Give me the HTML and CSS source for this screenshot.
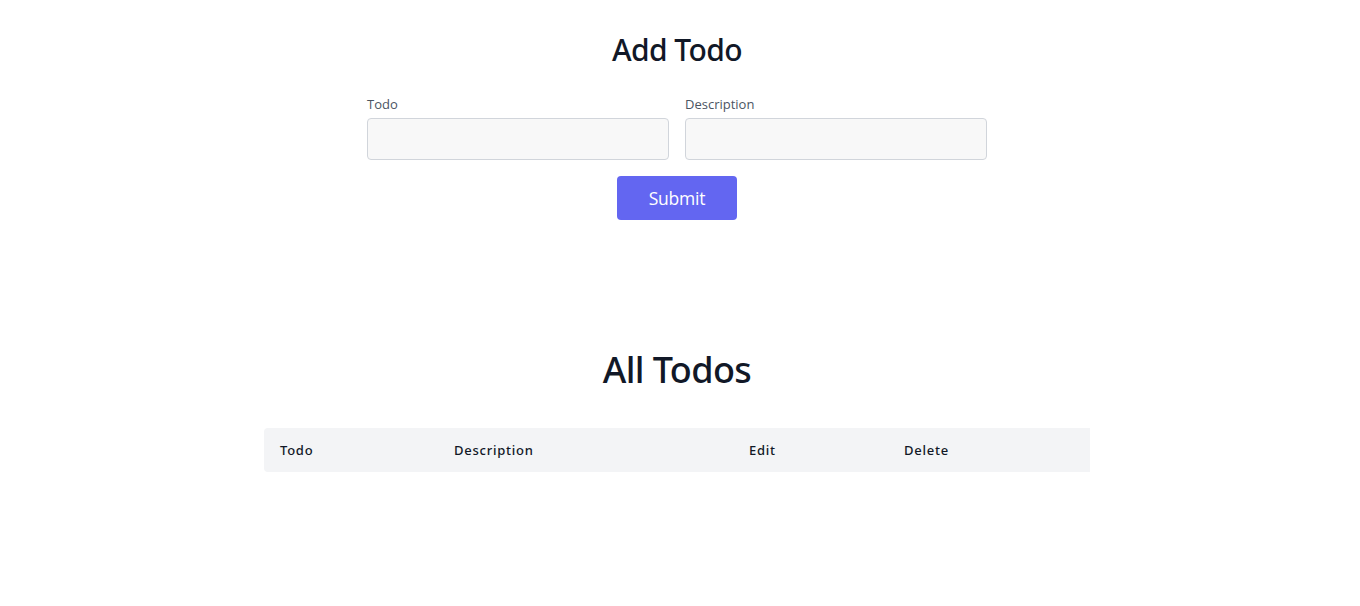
FILE: index.html
```html
<!DOCTYPE html>
<html lang="en">
<head>
<meta charset="utf-8">
<title>Todos</title>
<link rel="stylesheet" href="styles.css">
</head>
<body>
<main class="page">
  <section class="add">
    <h1 class="title-add">Add Todo</h1>
    <form class="form">
      <div class="fields">
        <div class="field">
          <label class="label" for="todo">Todo</label>
          <input class="input" id="todo" type="text">
        </div>
        <div class="field">
          <label class="label" for="desc">Description</label>
          <input class="input" id="desc" type="text">
        </div>
      </div>
      <button class="btn" type="button">Submit</button>
    </form>
  </section>
  <section class="list">
    <h2 class="title-all">All Todos</h2>
    <div class="table">
      <div class="th c1">Todo</div>
      <div class="th c2">Description</div>
      <div class="th c3">Edit</div>
      <div class="th c4">Delete</div>
    </div>
  </section>
</main>
</body>
</html>
```
FILE: styles.css
```css
* { box-sizing: border-box; }
html, body { margin: 0; background: #fff; }
body {
  font-family: "Open Sans", "Noto Sans", sans-serif;
  color: #111827;
}
.page {
  width: 1354px;
  display: flex;
  flex-direction: column;
  align-items: center;
}
.add {
  padding-top: 32px;
  display: flex;
  flex-direction: column;
  align-items: center;
}
.title-add {
  margin: 0;
  font-family: "Noto Sans", "Open Sans", sans-serif;
  font-size: 30px;
  line-height: 36px;
  font-weight: 500;
  color: #111827;
  letter-spacing: -0.6px;
}
.form {
  margin-top: 26px;
  display: flex;
  flex-direction: column;
  align-items: center;
}
.fields {
  display: flex;
  gap: 16px;
}
.field {
  width: 302px;
  display: flex;
  flex-direction: column;
}
.label {
  font-size: 13px;
  line-height: 20px;
  color: #4b5563;
  margin-bottom: 4px;
}
.input {
  height: 42px;
  width: 100%;
  background: #f8f8f8;
  border: 1px solid #d1d5db;
  border-radius: 4px;
  font: inherit;
}
.btn {
  margin-top: 16px;
  width: 120px;
  height: 44px;
  background: #6366f1;
  color: #fff;
  border: 0;
  border-radius: 4px;
  font-family: inherit;
  font-size: 17.5px;
  letter-spacing: -0.2px;
}
.list {
  margin-top: 130px;
  display: flex;
  flex-direction: column;
  align-items: center;
}
.title-all {
  margin: 0;
  font-family: "Noto Sans", "Open Sans", sans-serif;
  font-size: 36px;
  line-height: 40px;
  font-weight: 500;
  color: #111827;
  letter-spacing: -0.6px;
}
.table {
  margin-top: 38px;
  width: 826px;
  height: 44px;
  background: #f3f4f6;
  border-radius: 4px 0 0 4px;
  display: grid;
  grid-template-columns: 174px 295px 155px 202px;
  align-items: center;
}
.th {
  padding-left: 16px;
  font-family: "Noto Sans", "Open Sans", sans-serif;
  font-size: 13px;
  font-weight: 500;
  letter-spacing: 0.75px;
  color: #111827;
}
```
